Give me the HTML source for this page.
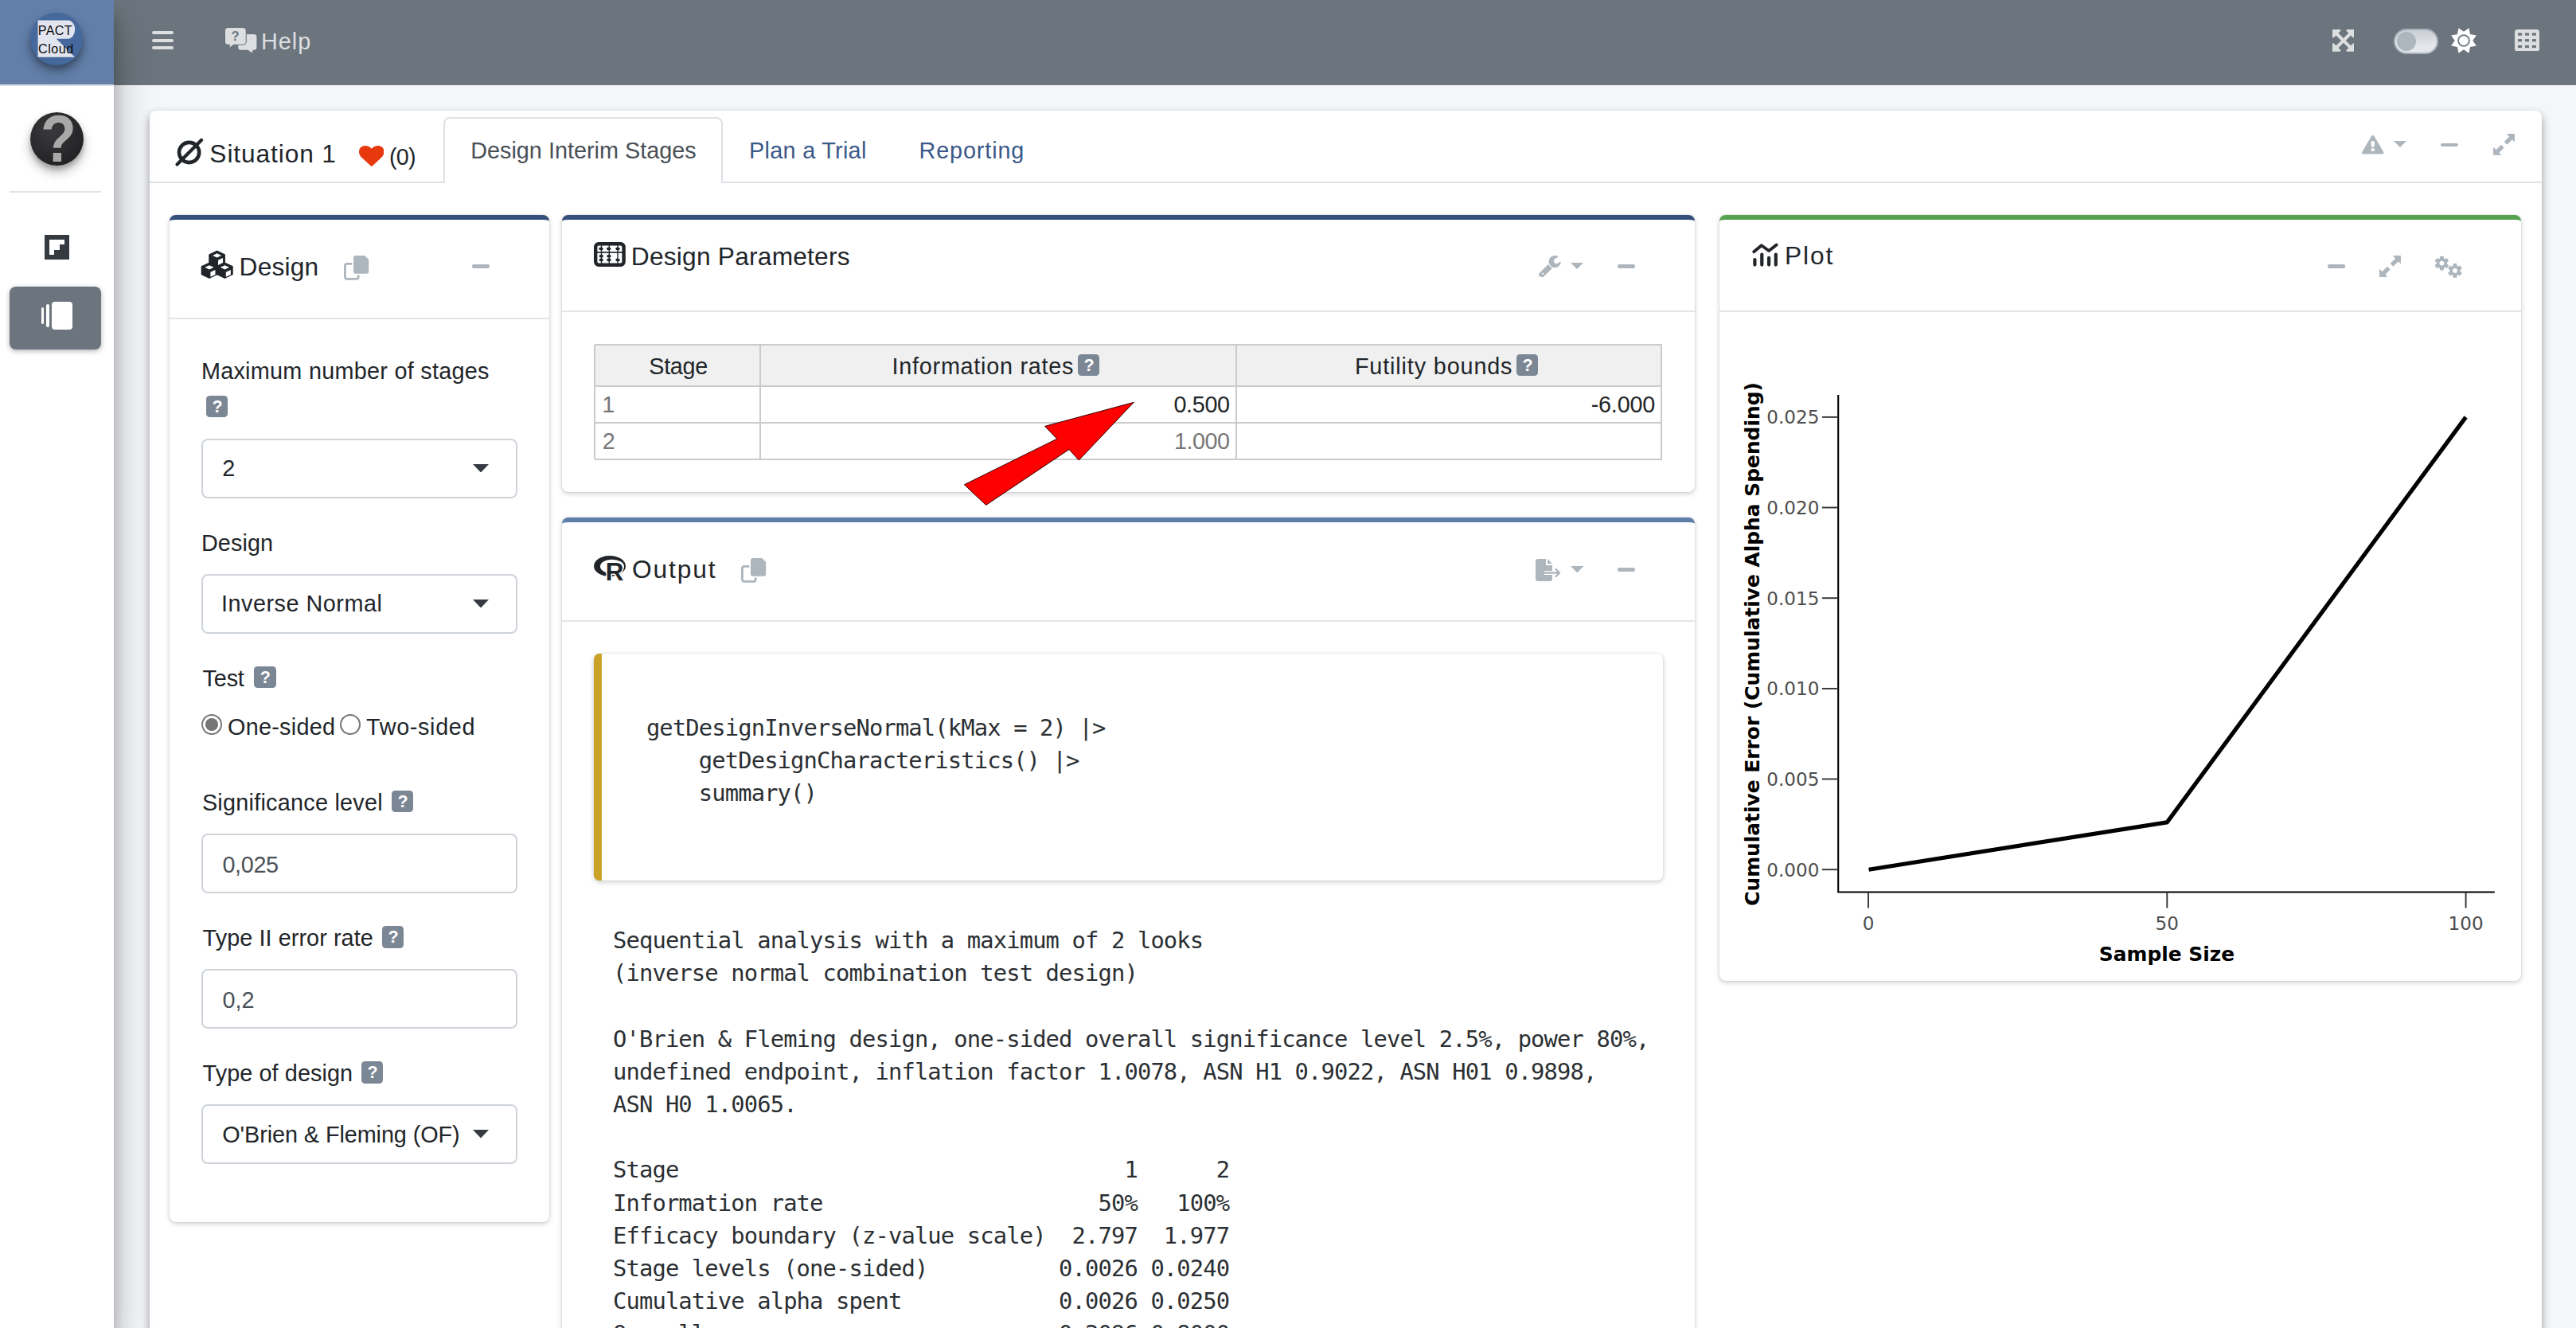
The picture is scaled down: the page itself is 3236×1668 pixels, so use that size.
<!DOCTYPE html>
<html lang="en"><head><meta charset="utf-8"><title>rpact cloud</title><style>html,body{margin:0;padding:0}body{width:3236px;height:1668px;overflow:hidden;background:#f4f6f9;position:relative}
.a{position:absolute;display:block}.t{position:absolute;white-space:pre;display:block}
.card{box-sizing:border-box;background:#fff;border-radius:8px;box-shadow:0 0 2px rgba(0,0,0,.125),0 2px 6px rgba(0,0,0,.2)}</style></head><body>
<div class="a" style="left:0px;top:0px;width:3236.00px;height:107.00px;background:#6c757d"></div>
<div class="a" style="left:0px;top:0px;width:143.00px;height:107.00px;background:#627faa"></div>
<div class="a" style="left:0px;top:105.5px;width:143.00px;height:2.00px;background:#d5dae3"></div>
<div class="a" style="left:191px;top:39.3px;width:27.40px;height:4.20px;background:#dcdee0;border-radius:2px"></div>
<div class="a" style="left:191px;top:48.6px;width:27.40px;height:4.20px;background:#dcdee0;border-radius:2px"></div>
<div class="a" style="left:191px;top:58.3px;width:27.40px;height:4.20px;background:#dcdee0;border-radius:2px"></div>
<svg class="a" style="left:281.8px;top:33.8px" width="42" height="34" viewBox="0 0 42 34"><g transform="translate(1,1)"><path d="M19.7 8H35.9a3.5 3.5 0 0 1 3.5 3.5V24.3a3.5 3.5 0 0 1-3.5 3.5H34.6L33.6 31.5L28.6 27.8H19.7a3.5 3.5 0 0 1-3.5-3.5V11.5a3.5 3.5 0 0 1 3.5-3.5Z" fill="#dcdee0"/><path d="M3.5 0H22.2a3.5 3.5 0 0 1 3.5 3.5V17.2a3.5 3.5 0 0 1-3.5 3.5H10.6L5.6 24.4L5.9 20.7H3.5a3.5 3.5 0 0 1-3.5-3.5V3.5a3.5 3.5 0 0 1 3.5-3.5Z" fill="#dcdee0" stroke="#6c757d" stroke-width="2.2" paint-order="stroke"/></g></svg>
<span class="t" style="left:290.56px;top:37.28px;font:16.5px/1 'Liberation Sans',sans-serif;font-weight:700;color:#6c757d;letter-spacing:0.000px;">?</span>
<span class="t" style="left:328.00px;top:38.32px;font:28.8px/1 'Liberation Sans',sans-serif;color:#dcdee0;letter-spacing:1.024px;">Help</span>
<svg class="a" style="left:2929.7px;top:37px" width="27.80" height="27.80" viewBox="0 -1408 1536 1536" preserveAspectRatio="none"><path transform="scale(1,-1)" fill="#dcdee0" d="M1283 995 1427 851C1439 839 1455 832 1472 832C1480 832 1489 834 1497 837C1520 847 1536 870 1536 896V1344C1536 1379 1507 1408 1472 1408H1024C998 1408 975 1392 965 1368C955 1345 960 1317 979 1299L1123 1155L768 800L413 1155L557 1299C576 1317 581 1345 571 1368C561 1392 538 1408 512 1408H64C29 1408 0 1379 0 1344V896C0 870 16 847 40 837C47 834 56 832 64 832C81 832 97 839 109 851L253 995L608 640L253 285L109 429C91 448 63 453 40 443C16 433 0 410 0 384V-64C0 -99 29 -128 64 -128H512C538 -128 561 -112 571 -88C581 -65 576 -37 557 -19L413 125L768 480L1123 125L979 -19C960 -37 955 -65 965 -88C975 -112 998 -128 1024 -128H1472C1507 -128 1536 -99 1536 -64V384C1536 410 1520 433 1497 443C1473 453 1445 448 1427 429L1283 285L928 640Z"/></svg>
<div class="a" style="left:3007.1px;top:35.9px;width:55.70px;height:31.90px;background:linear-gradient(#c9cdd3,#e3e6ea 70%);border:2px solid #a9b1bc;border-radius:16px;box-sizing:border-box"></div>
<div class="a" style="left:3010.9px;top:40px;width:24.00px;height:24.00px;background:#adb5bd;border-radius:50%"></div>
<svg class="a" style="left:3076.6px;top:32.6px" width="36" height="36" viewBox="0 0 36 36"><polygon points="24.54,2.20 25.99,10.01 33.80,11.46 29.30,18.00 33.80,24.54 25.99,25.99 24.54,33.80 18.00,29.30 11.46,33.80 10.01,25.99 2.20,24.54 6.70,18.00 2.20,11.46 10.01,10.01 11.46,2.20 18.00,6.70" fill="#fff"/><circle cx="18" cy="18" r="6.9" fill="#fff" stroke="#6c757d" stroke-width="1.8"/></svg>
<svg class="a" style="left:3159px;top:36.9px" width="31" height="27.6" viewBox="0 0 31 27.6"><rect width="31" height="27.6" rx="3.6" fill="#dcdee0"/><g fill="#6c757d"><rect x="3.95" y="4.40" width="5.1" height="3.2"/><rect x="12.95" y="4.40" width="5.1" height="3.2"/><rect x="21.85" y="4.40" width="5.1" height="3.2"/><rect x="3.95" y="12.10" width="5.1" height="3.2"/><rect x="12.95" y="12.10" width="5.1" height="3.2"/><rect x="21.85" y="12.10" width="5.1" height="3.2"/><rect x="3.95" y="19.90" width="5.1" height="3.2"/><rect x="12.95" y="19.90" width="5.1" height="3.2"/><rect x="21.85" y="19.90" width="5.1" height="3.2"/></g></svg>
<div class="a" style="left:0px;top:107.5px;width:143.00px;height:1560.50px;background:#fff"></div>
<div class="a" style="left:38.3px;top:16.2px;width:65.4px;height:65.4px;border-radius:50%;background:#46699d;box-shadow:0 8px 14px rgba(0,0,0,.3),0 4px 6px rgba(0,0,0,.2)"></div>
<svg class="a" style="left:38.3px;top:16.2px" width="65.4" height="65.4" viewBox="0 0 65.4 65.4"><path d="M9.56 9.4H47.2A9 11.65 0 0 1 47.2 32.7H32.9L55.9 55.7H9.56Z" fill="#e2e5ef"/></svg>
<span class="t" style="left:47.71px;top:30.11px;font:16.1px/1 'Liberation Sans',sans-serif;color:#0a0a0a;letter-spacing:0.387px;">PACT</span>
<span class="t" style="left:48.00px;top:53.42px;font:16.1px/1 'Liberation Sans',sans-serif;color:#0a0a0a;letter-spacing:0.508px;">Cloud</span>
<div class="a" style="left:38.1px;top:141.1px;width:67px;height:67px;border-radius:50%;background:radial-gradient(circle at 40% 35%,#3a3a3d,#222224 75%);box-shadow:0 8px 14px rgba(0,0,0,.28),0 4px 6px rgba(0,0,0,.2)"></div>
<span class="t" style="left:51.11px;top:131.64px;font:84.3px/1 'Liberation Sans',sans-serif;font-weight:700;color:#a9a9a9;letter-spacing:0.000px;transform:scaleX(.87);transform-origin:0 0;">?</span>
<div class="a" style="left:12.1px;top:239.8px;width:114.80px;height:1.80px;background:#dfe3e8"></div>
<div class="a" style="left:56.2px;top:295.4px;width:30.90px;height:30.50px;background:#343a40"></div>
<div class="a" style="left:62.3px;top:301.2px;width:18.60px;height:6.20px;background:#fff"></div>
<div class="a" style="left:62.3px;top:307.3px;width:12.50px;height:6.30px;background:#fff"></div>
<div class="a" style="left:62.3px;top:313.5px;width:6.20px;height:6.30px;background:#fff"></div>
<div class="a" style="left:12.1px;top:360.2px;width:114.80px;height:78.70px;background:#6c757d;border-radius:8px;box-shadow:0 2px 6px rgba(0,0,0,.3)"></div>
<div class="a" style="left:51.7px;top:386px;width:3.10px;height:21.20px;background:#fff;border-radius:1.5px"></div>
<div class="a" style="left:58px;top:382.1px;width:3.90px;height:29.00px;background:#fff;border-radius:2px"></div>
<div class="a" style="left:65.2px;top:378.6px;width:26.20px;height:35.40px;background:#fff;border-radius:4px"></div>
<div class="a" style="left:188px;top:138.6px;width:3005px;height:1700px;background:#fff;border-radius:8px;box-shadow:0 5.7px 11.4px rgba(0,0,0,.16),0 5.7px 11.4px rgba(0,0,0,.23)"></div>
<div class="a" style="left:188px;top:228.1px;width:3005.00px;height:2.00px;background:#dee2e6"></div>
<div class="a" style="left:557px;top:146.6px;width:351px;height:83.6px;box-sizing:border-box;background:#fff;border:2px solid #dee2e6;border-bottom:0;border-radius:8px 8px 0 0"></div>
<svg class="a" style="left:218px;top:172px" width="40" height="40" viewBox="0 0 40 40"><circle cx="19.6" cy="19.5" r="12.6" fill="none" stroke="#212529" stroke-width="4.6"/><line x1="4.5" y1="34.5" x2="35" y2="4" stroke="#212529" stroke-width="4.2" stroke-linecap="round"/></svg>
<span class="t" style="left:263.37px;top:178.35px;font:31.7px/1 'Liberation Sans',sans-serif;color:#212529;letter-spacing:0.887px;">Situation 1</span>
<svg class="a" style="left:450.7px;top:182.8px" width="31.60" height="25.90" viewBox="0 -1408 1792 1536" preserveAspectRatio="none"><path transform="scale(1,-1)" fill="#e8380d" d="M896 -128C912 -128 928 -122 940 -110L1563 490C1572 499 1792 700 1792 940C1792 1233 1613 1408 1314 1408C1139 1408 975 1270 896 1192C817 1270 653 1408 478 1408C179 1408 0 1233 0 940C0 700 220 499 228 492L852 -110C864 -122 880 -128 896 -128Z"/></svg>
<span class="t" style="left:489.07px;top:183.22px;font:28.8px/1 'Liberation Sans',sans-serif;color:#212529;letter-spacing:-0.790px;">(0)</span>
<span class="t" style="left:591.20px;top:175.42px;font:28.8px/1 'Liberation Sans',sans-serif;color:#495057;letter-spacing:0.011px;">Design Interim Stages</span>
<span class="t" style="left:941.10px;top:175.42px;font:28.8px/1 'Liberation Sans',sans-serif;color:#3b5988;letter-spacing:0.289px;">Plan a Trial</span>
<span class="t" style="left:1154.60px;top:175.42px;font:28.8px/1 'Liberation Sans',sans-serif;color:#3b5988;letter-spacing:0.854px;">Reporting</span>
<svg class="a" style="left:2967px;top:170px" width="27.50" height="23.60" viewBox="0.10625462705951705 -1536 1791.7874907458809 1664" preserveAspectRatio="none"><path transform="scale(1,-1)" fill="#adb5bd" d="M1024 161C1024 143 1010 128 992 128H800C782 128 768 143 768 161V351C768 369 782 384 800 384H992C1010 384 1024 369 1024 351V161ZM1022 535C1021 522 1006 512 988 512H803C784 512 769 522 769 535L752 992C752 998 755 1008 762 1013C768 1018 777 1024 786 1024H1006C1015 1024 1024 1018 1030 1013C1037 1008 1040 1000 1040 994ZM1008 1469C986 1510 943 1536 896 1536C849 1536 806 1510 784 1469L16 61C-6 22 -5 -26 18 -65C41 -104 83 -128 128 -128H1664C1709 -128 1751 -104 1774 -65C1797 -26 1798 22 1776 61Z"/></svg>
<svg class="a" style="left:3007px;top:177px" width="16" height="8" viewBox="0 0 16 8"><path d="M0 0H16L8 8Z" fill="#adb5bd"/></svg>
<div class="a" style="left:3066px;top:179.6px;width:21.70px;height:4.40px;background:#adb5bd;border-radius:2px"></div>
<svg class="a" style="left:3131.6px;top:167.8px" width="27.4" height="27.4" viewBox="0 0 27.4 27.4"><g fill="#adb5bd" stroke="#adb5bd"><path d="M17.6 0.6H26.8V9.8Z" stroke-width="1" stroke-linejoin="round"/><path d="M0.6 17.6V26.8H9.8Z" stroke-width="1" stroke-linejoin="round"/><path d="M22.8 4.6L15.6 11.8M4.6 22.8L11.8 15.6" stroke-width="5.2" fill="none"/></g></svg>
<div class="a card" style="left:212.8px;top:270px;width:477.2px;height:1264.5px;border-top:6px solid #34507a"></div>
<div class="a" style="left:212.8px;top:399px;width:477.20px;height:2.00px;background:#e3e5e8"></div>
<div class="a card" style="left:705.7px;top:270px;width:1423.6px;height:348.0px;border-top:6px solid #34507a"></div>
<div class="a" style="left:705.7px;top:389.6px;width:1423.60px;height:2.00px;background:#e3e5e8"></div>
<div class="a card" style="left:705.7px;top:650px;width:1423.6px;height:1150.0px;border-top:6px solid #5f7ea9"></div>
<div class="a" style="left:705.7px;top:778.8px;width:1423.60px;height:2.00px;background:#e3e5e8"></div>
<div class="a card" style="left:2159.5px;top:270px;width:1007.8px;height:961.5px;border-top:6px solid #55a24f"></div>
<div class="a" style="left:2159.5px;top:389.7px;width:1007.80px;height:2.00px;background:#e3e5e8"></div>
<svg class="a" style="left:250px;top:312px" width="46" height="40" viewBox="0 0 46 40"><path d="M22.6 3.7L31.950000000000003 8.048V17.552L22.6 21.9L13.250000000000002 17.552V8.048Z" fill="#212529" stroke="#212529" stroke-width="2" stroke-linejoin="round"/><path d="M22.6 6.362L28.200000000000003 8.962L22.6 11.562L17.0 8.962ZM24.0 14.82L30.05 11.992V18.052L24.0 20.88Z" fill="#fff"/><path d="M13 18.6L22.35 22.948V32.452L13 36.8L3.6500000000000004 32.452V22.948Z" fill="#212529" stroke="#212529" stroke-width="2" stroke-linejoin="round"/><path d="M13 21.262L18.6 23.862000000000002L13 26.462000000000003L7.4 23.862000000000002ZM14.4 29.72L20.45 26.892000000000003V32.952L14.4 35.78Z" fill="#fff"/><path d="M32.4 18.6L41.75 22.948V32.452L32.4 36.8L23.049999999999997 32.452V22.948Z" fill="#212529" stroke="#212529" stroke-width="2" stroke-linejoin="round"/><path d="M32.4 21.262L38.0 23.862000000000002L32.4 26.462000000000003L26.799999999999997 23.862000000000002ZM33.8 29.72L39.85 26.892000000000003V32.952L33.8 35.78Z" fill="#fff"/></svg>
<span class="t" style="left:300.56px;top:319.65px;font:31.7px/1 'Liberation Sans',sans-serif;color:#212529;letter-spacing:0.202px;">Design</span>
<svg class="a" style="left:432.1px;top:321.2px" width="32" height="32" viewBox="0 0 32 32"><rect x="1.4" y="10.4" width="16.8" height="19" rx="2.6" fill="none" stroke="#adb5bd" stroke-width="2.8"/><path d="M14.8 0H26.2L31.2 5V20a2.8 2.8 0 0 1-2.8 2.8H14.8a2.8 2.8 0 0 1-2.8-2.8V2.8a2.8 2.8 0 0 1 2.8-2.8Z" fill="#adb5bd" stroke="#fff" stroke-width="3.4" paint-order="stroke"/></svg>
<div class="a" style="left:593px;top:332.3px;width:22.00px;height:4.50px;background:#adb5bd;border-radius:2px"></div>
<span class="t" style="left:252.90px;top:451.62px;font:28.8px/1 'Liberation Sans',sans-serif;color:#212529;letter-spacing:0.275px;">Maximum number of stages</span>
<div class="a" style="left:258.9px;top:496.9px;width:27.40px;height:27.40px;background:#7b8794;border-radius:4.5px"></div>
<span class="t" style="left:266.43px;top:500.53px;font:21.5px/1 'Liberation Sans',sans-serif;font-weight:700;color:#fff;letter-spacing:0.000px;">?</span>
<div class="a" style="left:252.8px;top:551.2px;width:396.8px;height:74.6px;box-sizing:border-box;border:2px solid #ced4da;border-radius:8px;background:#fff"></div>
<span class="t" style="left:279.16px;top:574.12px;font:28.8px/1 'Liberation Sans',sans-serif;color:#212529;letter-spacing:0.000px;">2</span>
<svg class="a" style="left:594px;top:582.6px" width="20" height="10.5" viewBox="0 0 20 10.5"><path d="M0 0H20L10 10.5Z" fill="#343a40"/></svg>
<span class="t" style="left:252.90px;top:668.22px;font:28.8px/1 'Liberation Sans',sans-serif;color:#212529;letter-spacing:0.102px;">Design</span>
<div class="a" style="left:252.8px;top:721px;width:396.8px;height:74.6px;box-sizing:border-box;border:2px solid #ced4da;border-radius:8px;background:#fff"></div>
<span class="t" style="left:278.01px;top:744.22px;font:28.8px/1 'Liberation Sans',sans-serif;color:#212529;letter-spacing:0.508px;">Inverse Normal</span>
<svg class="a" style="left:594px;top:752.6px" width="20" height="10.5" viewBox="0 0 20 10.5"><path d="M0 0H20L10 10.5Z" fill="#343a40"/></svg>
<span class="t" style="left:254.62px;top:837.52px;font:28.8px/1 'Liberation Sans',sans-serif;color:#212529;letter-spacing:-0.195px;">Test</span>
<div class="a" style="left:319.2px;top:837px;width:27.40px;height:27.40px;background:#7b8794;border-radius:4.5px"></div>
<span class="t" style="left:326.73px;top:840.63px;font:21.5px/1 'Liberation Sans',sans-serif;font-weight:700;color:#fff;letter-spacing:0.000px;">?</span>
<div class="a" style="left:253.1px;top:897px;width:26px;height:26px;box-sizing:border-box;border:2px solid #767676;border-radius:50%;background:#fff"></div>
<div class="a" style="left:258.3px;top:902.2px;width:15.60px;height:15.60px;background:#757575;border-radius:50%"></div>
<span class="t" style="left:286.00px;top:898.82px;font:28.8px/1 'Liberation Sans',sans-serif;color:#212529;letter-spacing:0.270px;">One-sided</span>
<div class="a" style="left:426.8px;top:897px;width:26px;height:26px;box-sizing:border-box;border:2px solid #767676;border-radius:50%;background:#fff"></div>
<span class="t" style="left:460.02px;top:898.82px;font:28.8px/1 'Liberation Sans',sans-serif;color:#212529;letter-spacing:0.658px;">Two-sided</span>
<span class="t" style="left:253.90px;top:994.22px;font:28.8px/1 'Liberation Sans',sans-serif;color:#212529;letter-spacing:0.252px;">Significance level</span>
<div class="a" style="left:492px;top:993px;width:27.40px;height:27.40px;background:#7b8794;border-radius:4.5px"></div>
<span class="t" style="left:499.53px;top:996.63px;font:21.5px/1 'Liberation Sans',sans-serif;font-weight:700;color:#fff;letter-spacing:0.000px;">?</span>
<div class="a" style="left:252.8px;top:1047.4px;width:396.8px;height:74.6px;box-sizing:border-box;border:2px solid #ced4da;border-radius:8px;background:#fff"></div>
<span class="t" style="left:279.45px;top:1072.02px;font:28.8px/1 'Liberation Sans',sans-serif;color:#495057;letter-spacing:-0.349px;">0,025</span>
<span class="t" style="left:254.62px;top:1163.82px;font:28.8px/1 'Liberation Sans',sans-serif;color:#212529;letter-spacing:0.079px;">Type II error rate</span>
<div class="a" style="left:480px;top:1163.2px;width:27.40px;height:27.40px;background:#7b8794;border-radius:4.5px"></div>
<span class="t" style="left:487.53px;top:1166.83px;font:21.5px/1 'Liberation Sans',sans-serif;font-weight:700;color:#fff;letter-spacing:0.000px;">?</span>
<div class="a" style="left:252.8px;top:1217.2px;width:396.8px;height:74.6px;box-sizing:border-box;border:2px solid #ced4da;border-radius:8px;background:#fff"></div>
<span class="t" style="left:279.45px;top:1242.22px;font:28.8px/1 'Liberation Sans',sans-serif;color:#495057;letter-spacing:0.000px;">0,2</span>
<span class="t" style="left:254.62px;top:1334.02px;font:28.8px/1 'Liberation Sans',sans-serif;color:#212529;letter-spacing:0.093px;">Type of design</span>
<div class="a" style="left:454px;top:1333.2px;width:27.40px;height:27.40px;background:#7b8794;border-radius:4.5px"></div>
<span class="t" style="left:461.53px;top:1336.83px;font:21.5px/1 'Liberation Sans',sans-serif;font-weight:700;color:#fff;letter-spacing:0.000px;">?</span>
<div class="a" style="left:252.8px;top:1387px;width:396.8px;height:74.6px;box-sizing:border-box;border:2px solid #ced4da;border-radius:8px;background:#fff"></div>
<span class="t" style="left:279.30px;top:1411.22px;font:28.8px/1 'Liberation Sans',sans-serif;color:#212529;letter-spacing:-0.075px;">O'Brien &amp; Fleming (OF)</span>
<svg class="a" style="left:594px;top:1419.3px" width="20" height="10.5" viewBox="0 0 20 10.5"><path d="M0 0H20L10 10.5Z" fill="#343a40"/></svg>
<svg class="a" style="left:746px;top:304px" width="40" height="31" viewBox="0 0 40 31"><rect x="2.2" y="2.2" width="35.4" height="26.6" rx="4" fill="none" stroke="#212529" stroke-width="4.4"/><path d="M9.5 4V27M19.3 4V27M30 4V27" stroke="#212529" stroke-width="1.4"/><path d="M4 13H36" stroke="#212529" stroke-width="1.7"/><g fill="#212529"><ellipse cx="9" cy="8.4" rx="2.7" ry="1.9"/><ellipse cx="18.7" cy="8.4" rx="2.7" ry="1.9"/><ellipse cx="30" cy="8.4" rx="2.7" ry="1.9"/><ellipse cx="9.3" cy="17.7" rx="2.7" ry="1.9"/><ellipse cx="19" cy="17.7" rx="2.7" ry="1.9"/><ellipse cx="9.3" cy="22.4" rx="2.7" ry="1.9"/><ellipse cx="19" cy="22.4" rx="2.7" ry="1.9"/><ellipse cx="30" cy="22.4" rx="2.7" ry="1.9"/></g></svg>
<span class="t" style="left:792.86px;top:306.86px;font:31.7px/1 'Liberation Sans',sans-serif;color:#212529;letter-spacing:0.218px;">Design Parameters</span>
<svg class="a" style="left:1933px;top:320.7px" width="27.80" height="27.80" viewBox="21 -1408 1641 1643" preserveAspectRatio="none"><path transform="scale(1,-1)" fill="#adb5bd" d="M384 64C384 29 355 0 320 0C285 0 256 29 256 64C256 99 285 128 320 128C355 128 384 99 384 64ZM1028 484C897 536 792 641 740 772L59 91C35 67 21 34 21 0C21 -34 35 -67 59 -90L165 -198C189 -221 222 -235 256 -235C290 -235 323 -221 346 -198L1028 484ZM1662 919C1662 939 1650 954 1630 954C1610 954 1378 808 1345 789L1152 896V1120L1445 1289C1454 1295 1461 1306 1461 1317C1461 1329 1455 1338 1445 1345C1384 1386 1289 1408 1216 1408C969 1408 768 1207 768 960C768 713 969 512 1216 512C1405 512 1576 635 1639 813C1650 845 1662 886 1662 919Z"/></svg>
<svg class="a" style="left:1973px;top:330px" width="16" height="8" viewBox="0 0 16 8"><path d="M0 0H16L8 8Z" fill="#adb5bd"/></svg>
<div class="a" style="left:2031.6px;top:332.4px;width:22.20px;height:4.40px;background:#adb5bd;border-radius:2px"></div>
<div class="a" style="left:746.5px;top:432.6px;width:1340.80px;height:52.40px;background:#f0f0f0"></div>
<div class="a" style="left:746.5px;top:431.6px;width:1341.30px;height:2.00px;background:#cbcbcb"></div>
<div class="a" style="left:746.5px;top:483.8px;width:1341.30px;height:2.00px;background:#cbcbcb"></div>
<div class="a" style="left:746.5px;top:529.6px;width:1341.30px;height:2.00px;background:#cbcbcb"></div>
<div class="a" style="left:746.5px;top:575.6px;width:1341.30px;height:2.00px;background:#cbcbcb"></div>
<div class="a" style="left:745.5px;top:432.6px;width:2.00px;height:144.40px;background:#cbcbcb"></div>
<div class="a" style="left:953.6px;top:432.6px;width:2.00px;height:144.40px;background:#cbcbcb"></div>
<div class="a" style="left:1551.8px;top:432.6px;width:2.00px;height:144.40px;background:#cbcbcb"></div>
<div class="a" style="left:2086.3px;top:432.6px;width:2.00px;height:144.40px;background:#cbcbcb"></div>
<span class="t" style="left:815.30px;top:446.22px;font:28.8px/1 'Liberation Sans',sans-serif;color:#212529;letter-spacing:-0.344px;">Stage</span>
<span class="t" style="left:1120.61px;top:446.22px;font:28.8px/1 'Liberation Sans',sans-serif;color:#212529;letter-spacing:0.729px;">Information rates</span>
<div class="a" style="left:1354px;top:445px;width:27.40px;height:27.40px;background:#7b8794;border-radius:4.5px"></div>
<span class="t" style="left:1361.53px;top:448.62px;font:21.5px/1 'Liberation Sans',sans-serif;font-weight:700;color:#fff;letter-spacing:0.000px;">?</span>
<span class="t" style="left:1701.90px;top:446.22px;font:28.8px/1 'Liberation Sans',sans-serif;color:#212529;letter-spacing:0.854px;">Futility bounds</span>
<div class="a" style="left:1905px;top:445px;width:27.40px;height:27.40px;background:#7b8794;border-radius:4.5px"></div>
<span class="t" style="left:1912.53px;top:448.62px;font:21.5px/1 'Liberation Sans',sans-serif;font-weight:700;color:#fff;letter-spacing:0.000px;">?</span>
<span class="t" style="left:756.34px;top:493.92px;font:28.8px/1 'Liberation Sans',sans-serif;color:#777;letter-spacing:0.000px;">1</span>
<span class="t" style="left:756.66px;top:540.02px;font:28.8px/1 'Liberation Sans',sans-serif;color:#777;letter-spacing:0.000px;">2</span>
<span class="t" style="left:1474.45px;top:493.92px;font:28.8px/1 'Liberation Sans',sans-serif;color:#212529;letter-spacing:-0.349px;">0.500</span>
<span class="t" style="left:1474.94px;top:540.02px;font:28.8px/1 'Liberation Sans',sans-serif;color:#777;letter-spacing:-0.472px;">1.000</span>
<span class="t" style="left:1998.70px;top:493.92px;font:28.8px/1 'Liberation Sans',sans-serif;color:#212529;letter-spacing:-0.220px;">-6.000</span>
<svg class="a" style="left:744px;top:696px" width="46" height="36" viewBox="0 0 46 36"><path fill-rule="evenodd" fill="#212529" d="M2 15a20 13 0 1 0 40 0a20 13 0 1 0-40 0ZM10 15.5a15 8.8 0 1 0 30 0a15 8.8 0 1 0-30 0Z"/></svg>
<span class="t" style="left:760.76px;top:702.61px;font:31.4px/1 'Liberation Sans',sans-serif;font-weight:700;color:#212529;letter-spacing:0.000px;-webkit-text-stroke:3px #fff;paint-order:stroke fill;">R</span>
<span class="t" style="left:794.07px;top:699.55px;font:31.7px/1 'Liberation Sans',sans-serif;color:#212529;letter-spacing:1.857px;">Output</span>
<svg class="a" style="left:931px;top:701px" width="32" height="32" viewBox="0 0 32 32"><rect x="1.4" y="10.4" width="16.8" height="19" rx="2.6" fill="none" stroke="#adb5bd" stroke-width="2.8"/><path d="M14.8 0H26.2L31.2 5V20a2.8 2.8 0 0 1-2.8 2.8H14.8a2.8 2.8 0 0 1-2.8-2.8V2.8a2.8 2.8 0 0 1 2.8-2.8Z" fill="#adb5bd" stroke="#fff" stroke-width="3.4" paint-order="stroke"/></svg>
<svg class="a" style="left:1929px;top:702px" width="32" height="28" viewBox="0 0 32 28"><path d="M3 0H13V8H21V25a3 3 0 0 1-3 3H3a3 3 0 0 1-3-3V3a3 3 0 0 1 3-3Z" fill="#adb5bd"/><path d="M15 0L21 6H15Z" fill="#adb5bd"/><path d="M11 17.5H30M25.5 13L30 17.5L25.5 22" fill="none" stroke="#fff" stroke-width="5"/><path d="M11 17.5H30M25.5 13L30 17.5L25.5 22" fill="none" stroke="#adb5bd" stroke-width="2.4" stroke-linecap="round" stroke-linejoin="round"/></svg>
<svg class="a" style="left:1972.6px;top:710.6px" width="16.6" height="8.4" viewBox="0 0 16.6 8.4"><path d="M0 0H16.6L8.3 8.4Z" fill="#adb5bd"/></svg>
<div class="a" style="left:2032px;top:713.4px;width:22.00px;height:4.60px;background:#adb5bd;border-radius:2px"></div>
<div class="a" style="left:745.9px;top:820.6px;width:1343px;height:285px;box-sizing:border-box;background:#fff;border-left:10.5px solid #c9a227;border-radius:7px;box-shadow:0 0 2px rgba(0,0,0,.125),0 2px 6px rgba(0,0,0,.2)"></div>
<span class="t" style="left:811.90px;top:900.01px;font:28.8px/1 'DejaVu Sans Mono','Liberation Mono',monospace;color:#2b2f33;letter-spacing:-0.864px">getDesignInverseNormal(kMax = 2) |&gt;</span>
<span class="t" style="left:811.90px;top:940.61px;font:28.8px/1 'DejaVu Sans Mono','Liberation Mono',monospace;color:#2b2f33;letter-spacing:-0.864px">    getDesignCharacteristics() |&gt;</span>
<span class="t" style="left:811.90px;top:981.61px;font:28.8px/1 'DejaVu Sans Mono','Liberation Mono',monospace;color:#2b2f33;letter-spacing:-0.864px">    summary()</span>
<span class="t" style="left:770.00px;top:1166.91px;font:28.8px/1 'DejaVu Sans Mono','Liberation Mono',monospace;color:#2b2f33;letter-spacing:-0.864px">Sequential analysis with a maximum of 2 looks</span>
<span class="t" style="left:770.00px;top:1208.11px;font:28.8px/1 'DejaVu Sans Mono','Liberation Mono',monospace;color:#2b2f33;letter-spacing:-0.864px">(inverse normal combination test design)</span>
<span class="t" style="left:770.00px;top:1290.51px;font:28.8px/1 'DejaVu Sans Mono','Liberation Mono',monospace;color:#2b2f33;letter-spacing:-0.864px">O'Brien &amp; Fleming design, one-sided overall significance level 2.5%, power 80%,</span>
<span class="t" style="left:770.00px;top:1331.71px;font:28.8px/1 'DejaVu Sans Mono','Liberation Mono',monospace;color:#2b2f33;letter-spacing:-0.864px">undefined endpoint, inflation factor 1.0078, ASN H1 0.9022, ASN H01 0.9898,</span>
<span class="t" style="left:770.00px;top:1372.91px;font:28.8px/1 'DejaVu Sans Mono','Liberation Mono',monospace;color:#2b2f33;letter-spacing:-0.864px">ASN H0 1.0065.</span>
<span class="t" style="left:770.00px;top:1455.31px;font:28.8px/1 'DejaVu Sans Mono','Liberation Mono',monospace;color:#2b2f33;letter-spacing:-0.864px">Stage                                  1      2</span>
<span class="t" style="left:770.00px;top:1496.51px;font:28.8px/1 'DejaVu Sans Mono','Liberation Mono',monospace;color:#2b2f33;letter-spacing:-0.864px">Information rate                     50%   100%</span>
<span class="t" style="left:770.00px;top:1537.71px;font:28.8px/1 'DejaVu Sans Mono','Liberation Mono',monospace;color:#2b2f33;letter-spacing:-0.864px">Efficacy boundary (z-value scale)  2.797  1.977</span>
<span class="t" style="left:770.00px;top:1578.91px;font:28.8px/1 'DejaVu Sans Mono','Liberation Mono',monospace;color:#2b2f33;letter-spacing:-0.864px">Stage levels (one-sided)          0.0026 0.0240</span>
<span class="t" style="left:770.00px;top:1620.11px;font:28.8px/1 'DejaVu Sans Mono','Liberation Mono',monospace;color:#2b2f33;letter-spacing:-0.864px">Cumulative alpha spent            0.0026 0.0250</span>
<span class="t" style="left:770.00px;top:1661.31px;font:28.8px/1 'DejaVu Sans Mono','Liberation Mono',monospace;color:#2b2f33;letter-spacing:-0.864px">Overall power                     0.2096 0.8000</span>
<svg class="a" style="left:1200px;top:495px" width="240" height="150" viewBox="0 0 240 150"><polygon points="224.3,10.3 112.6,40.4 127.8,56.2 11.4,113.7 38.6,139.4 143,69.5 155.3,83" fill="#fe0000" stroke="#300" stroke-width="1"/></svg>
<svg class="a" style="left:2199px;top:303px" width="37" height="33" viewBox="0 0 37 33"><path d="M5.4 23.1V29.6M14.3 16.6V29.6M23.1 20.8V29.6M31.8 16.6V29.6" stroke="#212529" stroke-width="4.2" stroke-linecap="round"/><path d="M4.2 13.3L13.8 5.3L23.1 12L32.7 4.4" fill="none" stroke="#212529" stroke-width="3.8" stroke-linecap="round" stroke-linejoin="round"/></svg>
<span class="t" style="left:2242.06px;top:306.06px;font:31.7px/1 'Liberation Sans',sans-serif;color:#212529;letter-spacing:1.857px;">Plot</span>
<div class="a" style="left:2924px;top:332.2px;width:22.00px;height:4.60px;background:#adb5bd;border-radius:2px"></div>
<svg class="a" style="left:2989px;top:321px" width="27.4" height="27.4" viewBox="0 0 27.4 27.4"><g fill="#adb5bd" stroke="#adb5bd"><path d="M17.6 0.6H26.8V9.8Z" stroke-width="1" stroke-linejoin="round"/><path d="M0.6 17.6V26.8H9.8Z" stroke-width="1" stroke-linejoin="round"/><path d="M22.8 4.6L15.6 11.8M4.6 22.8L11.8 15.6" stroke-width="5.2" fill="none"/></g></svg>
<svg class="a" style="left:3056px;top:319px" width="40" height="32" viewBox="0 0 40 32"><g transform="translate(11.4,11.6)" fill="#adb5bd"><circle r="6.5"/><rect x="-2.5" y="-8.9" width="5" height="5" rx="1.1" transform="rotate(0)"/><rect x="-2.5" y="-8.9" width="5" height="5" rx="1.1" transform="rotate(60)"/><rect x="-2.5" y="-8.9" width="5" height="5" rx="1.1" transform="rotate(120)"/><rect x="-2.5" y="-8.9" width="5" height="5" rx="1.1" transform="rotate(180)"/><rect x="-2.5" y="-8.9" width="5" height="5" rx="1.1" transform="rotate(240)"/><rect x="-2.5" y="-8.9" width="5" height="5" rx="1.1" transform="rotate(300)"/><circle r="2.9" fill="#fff"/></g><g transform="translate(28,20.9)" fill="#adb5bd"><circle r="6.5"/><rect x="-2.5" y="-8.9" width="5" height="5" rx="1.1" transform="rotate(0)"/><rect x="-2.5" y="-8.9" width="5" height="5" rx="1.1" transform="rotate(60)"/><rect x="-2.5" y="-8.9" width="5" height="5" rx="1.1" transform="rotate(120)"/><rect x="-2.5" y="-8.9" width="5" height="5" rx="1.1" transform="rotate(180)"/><rect x="-2.5" y="-8.9" width="5" height="5" rx="1.1" transform="rotate(240)"/><rect x="-2.5" y="-8.9" width="5" height="5" rx="1.1" transform="rotate(300)"/><circle r="2.9" fill="#fff"/></g></svg>
<svg class="a" style="left:2160px;top:400px" width="1000" height="830" viewBox="0 0 1000 830"><path d="M149.19999999999982 96V720.5H973.8000000000002" fill="none" stroke="#000" stroke-width="2.1"/><path d="M128.9000000000001 692.2H149.19999999999982" stroke="#333" stroke-width="1.9"/><text x="125.40000000000009" y="700.7" text-anchor="end" font-family="DejaVu Sans, sans-serif" font-size="23.1" fill="#4d4d4d">0.000</text><path d="M128.9000000000001 578.5H149.19999999999982" stroke="#333" stroke-width="1.9"/><text x="125.40000000000009" y="587.0" text-anchor="end" font-family="DejaVu Sans, sans-serif" font-size="23.1" fill="#4d4d4d">0.005</text><path d="M128.9000000000001 464.9H149.19999999999982" stroke="#333" stroke-width="1.9"/><text x="125.40000000000009" y="473.4" text-anchor="end" font-family="DejaVu Sans, sans-serif" font-size="23.1" fill="#4d4d4d">0.010</text><path d="M128.9000000000001 351.2H149.19999999999982" stroke="#333" stroke-width="1.9"/><text x="125.40000000000009" y="359.7" text-anchor="end" font-family="DejaVu Sans, sans-serif" font-size="23.1" fill="#4d4d4d">0.015</text><path d="M128.9000000000001 237.5H149.19999999999982" stroke="#333" stroke-width="1.9"/><text x="125.40000000000009" y="246.0" text-anchor="end" font-family="DejaVu Sans, sans-serif" font-size="23.1" fill="#4d4d4d">0.020</text><path d="M128.9000000000001 123.9H149.19999999999982" stroke="#333" stroke-width="1.9"/><text x="125.40000000000009" y="132.4" text-anchor="end" font-family="DejaVu Sans, sans-serif" font-size="23.1" fill="#4d4d4d">0.025</text><path d="M187.0 720.5V740.4000000000001" stroke="#333" stroke-width="1.9"/><text x="187.0" y="768.0999999999999" text-anchor="middle" font-family="DejaVu Sans, sans-serif" font-size="23.1" fill="#4d4d4d">0</text><path d="M562.3 720.5V740.4000000000001" stroke="#333" stroke-width="1.9"/><text x="562.3" y="768.0999999999999" text-anchor="middle" font-family="DejaVu Sans, sans-serif" font-size="23.1" fill="#4d4d4d">50</text><path d="M937.6 720.5V740.4000000000001" stroke="#333" stroke-width="1.9"/><text x="937.6" y="768.0999999999999" text-anchor="middle" font-family="DejaVu Sans, sans-serif" font-size="23.1" fill="#4d4d4d">100</text><polyline points="187.6,692.2 562.3,632.8 937.6,123.9" fill="none" stroke="#000" stroke-width="5.2" stroke-linejoin="miter"/><text x="562" y="807" text-anchor="middle" font-family="DejaVu Sans, sans-serif" font-weight="700" font-size="24.9" fill="#000">Sample Size</text><text transform="translate(50.19999999999982,409) rotate(-90)" text-anchor="middle" font-family="DejaVu Sans, sans-serif" font-weight="700" font-size="24.9" fill="#000">Cumulative Error (Cumulative Alpha Spending)</text></svg>
<div class="a" style="left:0;top:0;width:143px;height:1668px;box-shadow:0 27px 53px rgba(0,0,0,.25),0 19px 19px rgba(0,0,0,.22);pointer-events:none"></div>
</body></html>
